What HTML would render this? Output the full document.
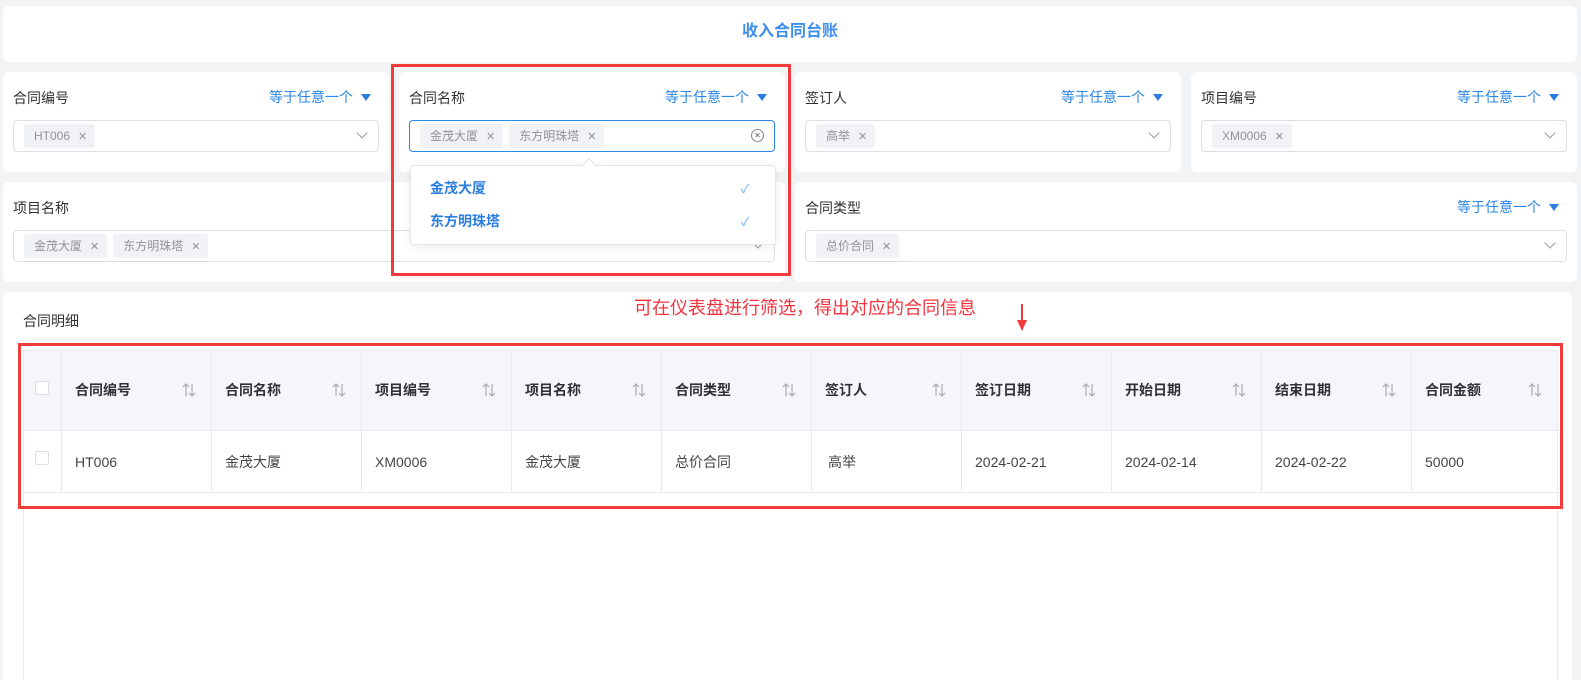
<!DOCTYPE html>
<html style="height:680px;overflow:hidden"><head><meta charset="utf-8"><style>
*{box-sizing:border-box;margin:0;padding:0}
body{width:1581px;height:680px;background:#f2f3f5;position:relative;overflow:hidden;font-family:"Liberation Sans","Noto Sans CJK SC",sans-serif;font-size:14px;color:#333}
.card{position:absolute;background:#fff;border-radius:6px}
.abs{position:absolute}
.lbl{position:absolute;left:10px;top:16px;font-size:14px;color:#303133}
.op{position:absolute;right:18px;top:15px;font-size:14px;color:#2a86e8}
.op:after{content:"";display:inline-block;margin-left:8px;border-left:5px solid transparent;border-right:5px solid transparent;border-top:7px solid #2a7de1;vertical-align:1px}
.inp{position:absolute;left:10px;right:10px;top:48px;height:32px;border:1px solid #dcdfe6;border-radius:4px;padding:3px 0 0 10px}
.tag{display:inline-block;height:24px;line-height:24px;background:#f0f2f5;color:#909399;font-size:12px;padding:0 8px 0 10px;border-radius:3px;margin-right:6px}
.tag:after{content:"✕";margin-left:8px;font-size:11px}
.chev{position:absolute;right:12px;top:8px;width:8px;height:8px;border-right:1px solid #999;border-bottom:1px solid #999;transform:rotate(45deg)}
.th,.td{position:absolute;border-right:1px solid #e8eaef;padding-left:13px}
.th{top:351px;height:79px;line-height:79px;font-weight:bold;background:#f5f6f9;color:#303133}
.td{top:430px;height:63px;line-height:64px;color:#444}
.sort{position:absolute;right:14px;top:31px;width:16px;height:16px}
.cb{position:absolute;left:35px;width:14px;height:14px;border:1px solid #dcdfe6;border-radius:2px;background:#fff}
</style></head><body>
<svg width="0" height="0" style="position:absolute"><symbol id="s" viewBox="0 0 16 16"><path d="M5 14V2M2 5l3-3 3 3M11 2v12M8 11l3 3 3-3" fill="none" stroke="#a8abb2" stroke-width="1.2"/></symbol></svg>
<div class="card" style="left:3px;top:6px;width:1574px;height:56px"><div class="abs" style="left:0;right:0;top:11px;text-align:center;font-weight:bold;font-size:16px;color:#3d8ef0">收入合同台账</div></div>

<div class="card" style="left:3px;top:72px;width:386px;height:100px"><div class="lbl">合同编号</div><div class="op">等于任意一个</div><div class="inp"><span class="tag">HT006</span><div class="chev"></div></div></div>
<div class="card" style="left:399px;top:72px;width:386px;height:100px"><div class="lbl">合同名称</div><div class="op">等于任意一个</div><div class="inp" style="border-color:#2a86e8"><span class="tag">金茂大厦</span><span class="tag">东方明珠塔</span><div class="abs" style="right:10px;top:8px;width:13px;height:13px;border:1px solid #888;border-radius:50%;font-size:8px;line-height:11px;text-align:center;color:#666">✕</div></div></div>
<div class="card" style="left:795px;top:72px;width:386px;height:100px"><div class="lbl">签订人</div><div class="op">等于任意一个</div><div class="inp"><span class="tag">高举</span><div class="chev"></div></div></div>
<div class="card" style="left:1191px;top:72px;width:386px;height:100px"><div class="lbl">项目编号</div><div class="op">等于任意一个</div><div class="inp"><span class="tag">XM0006</span><div class="chev"></div></div></div>

<div class="card" style="left:3px;top:182px;width:782px;height:100px"><div class="lbl">项目名称</div><div class="inp"><span class="tag">金茂大厦</span><span class="tag">东方明珠塔</span><div class="chev"></div></div></div>
<div class="card" style="left:795px;top:182px;width:782px;height:100px"><div class="lbl">合同类型</div><div class="op">等于任意一个</div><div class="inp"><span class="tag">总价合同</span><div class="chev"></div></div></div>

<div class="abs" style="left:410px;top:165px;width:366px;height:80px;background:#fff;border:1px solid #e4e7ed;border-radius:4px;box-shadow:0 2px 10px rgba(0,0,0,.08)"></div>
<div class="abs" style="left:584px;top:160px;width:10px;height:10px;background:#fff;border-left:1px solid #e4e7ed;border-top:1px solid #e4e7ed;transform:rotate(45deg)"></div>
<div class="abs" style="left:430px;top:178px;font-weight:bold;color:#2a7de1">金茂大厦</div>
<div class="abs" style="left:430px;top:211px;font-weight:bold;color:#2a7de1">东方明珠塔</div>
<div class="abs" style="left:741px;top:180px;color:#6aa8ef;font-size:12px">✓</div>
<div class="abs" style="left:741px;top:213px;color:#6aa8ef;font-size:12px">✓</div>
<div class="abs" style="left:391px;top:64px;width:400px;height:212px;border:3px solid #f23b3b"></div>

<div class="card" style="left:3px;top:292px;width:1569px;height:388px;border-radius:6px 6px 0 0"></div>
<div class="abs" style="left:23px;top:311px;font-size:14px;color:#303133">合同明细</div>
<div class="abs" style="left:634px;top:294px;font-size:18px;color:#f5333f">可在仪表盘进行筛选，得出对应的合同信息</div>
<div class="abs" style="left:1021px;top:304px;width:2px;height:20px;background:#f23b3b"></div>
<div class="abs" style="left:1017px;top:320px;border-left:5px solid transparent;border-right:5px solid transparent;border-top:11px solid #f23b3b"></div>

<div class="abs" style="left:23px;top:351px;width:1535px;height:329px;border-left:1px solid #e8eaef;border-right:1px solid #e8eaef"></div>
<div class="th" style="left:23px;width:39px;padding:0;border-left:1px solid #e8eaef"></div>
<div class="td" style="left:23px;width:39px;padding:0;border-left:1px solid #e8eaef"></div>
<div class="cb" style="top:381px"></div><div class="cb" style="top:451px"></div>

<div class="th" style="left:62px;width:150px">合同编号<svg class="sort"><use href="#s"/></svg></div>
<div class="th" style="left:212px;width:150px">合同名称<svg class="sort"><use href="#s"/></svg></div>
<div class="th" style="left:362px;width:150px">项目编号<svg class="sort"><use href="#s"/></svg></div>
<div class="th" style="left:512px;width:150px">项目名称<svg class="sort"><use href="#s"/></svg></div>
<div class="th" style="left:662px;width:150px">合同类型<svg class="sort"><use href="#s"/></svg></div>
<div class="th" style="left:812px;width:150px">签订人<svg class="sort"><use href="#s"/></svg></div>
<div class="th" style="left:962px;width:150px">签订日期<svg class="sort"><use href="#s"/></svg></div>
<div class="th" style="left:1112px;width:150px">开始日期<svg class="sort"><use href="#s"/></svg></div>
<div class="th" style="left:1262px;width:150px">结束日期<svg class="sort"><use href="#s"/></svg></div>
<div class="th" style="left:1412px;width:146px">合同金额<svg class="sort"><use href="#s"/></svg></div>

<div class="td" style="left:62px;width:150px">HT006</div>
<div class="td" style="left:212px;width:150px">金茂大厦</div>
<div class="td" style="left:362px;width:150px">XM0006</div>
<div class="td" style="left:512px;width:150px">金茂大厦</div>
<div class="td" style="left:662px;width:150px">总价合同</div>
<div class="td" style="left:812px;width:150px;padding-left:16px">高举</div>
<div class="td" style="left:962px;width:150px">2024-02-21</div>
<div class="td" style="left:1112px;width:150px">2024-02-14</div>
<div class="td" style="left:1262px;width:150px">2024-02-22</div>
<div class="td" style="left:1412px;width:146px">50000</div>
<div class="abs" style="left:23px;top:350px;width:1535px;height:1px;background:#e8eaef"></div>
<div class="abs" style="left:23px;top:430px;width:1535px;height:1px;background:#e8eaef"></div>
<div class="abs" style="left:23px;top:492px;width:1535px;height:1px;background:#e8eaef"></div>
<div class="abs" style="left:18px;top:343px;width:1545px;height:166px;border:3px solid #f23b3b"></div>
</body></html>
